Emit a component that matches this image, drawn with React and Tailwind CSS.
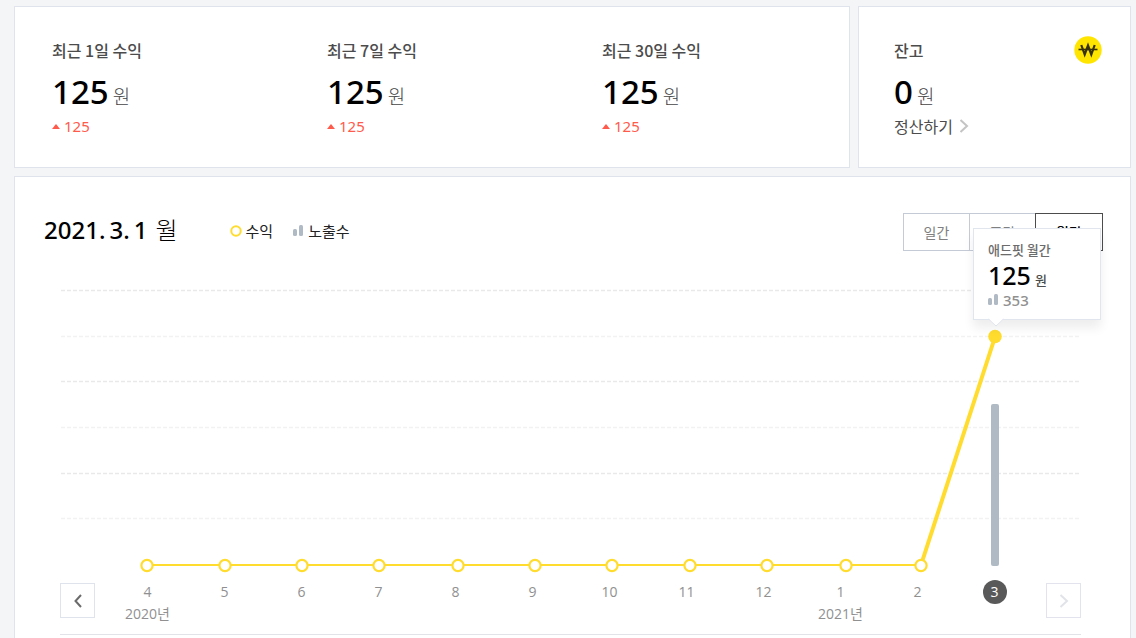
import React, { useState } from "react";

const POINTS = [87, 165, 242, 319, 398, 475, 552, 630, 707, 786, 861];
const GRID = [10, 56, 101, 147, 193, 238];
const MONTHS = [
  { label: "4", year: "2020년" },
  { label: "5" },
  { label: "6" },
  { label: "7" },
  { label: "8" },
  { label: "9" },
  { label: "10" },
  { label: "11" },
  { label: "12" },
  { label: "1", year: "2021년" },
  { label: "2" },
  { label: "3", active: true },
];

function Bars() {
  return (
    <svg width="11" height="12" viewBox="0 0 11 12" aria-hidden="true">
      <rect x="0" y="4" width="4" height="7" rx="1.5" fill="#b0bac5" />
      <rect x="6" y="0" width="4" height="11" rx="1.5" fill="#b0bac5" />
    </svg>
  );
}

function Amount({ value }) {
  return (
    <p className="mt-2.5 flex items-baseline gap-1 leading-10">
      <span className="font-['Noto_Sans',sans-serif] text-[33px] font-medium text-black">{value}</span>
      <span className="text-[19px] leading-10 font-light text-[#444]">원</span>
    </p>
  );
}

function Revenue({ title, value, diff }) {
  return (
    <div>
      <h2 className="text-base leading-6 font-medium text-[#4c4c4c]">{title}</h2>
      <Amount value={value} />
      <p className="-mt-0.5 flex items-center gap-1 font-['Noto_Sans',sans-serif] text-[15px] leading-6 text-[#ff5b4c]">
        <svg width="8" height="5" viewBox="0 0 8 5" aria-hidden="true">
          <path d="M4 0L8 5H0z" fill="#ff5b4c" />
        </svg>
        {diff}
      </p>
    </div>
  );
}

function Chevron({ d, color, width }) {
  return (
    <svg width="10" height="14" viewBox="0 0 10 14" fill="none" aria-hidden="true">
      <path d={d} stroke={color} strokeWidth={width} />
    </svg>
  );
}

function Tooltip() {
  return (
    <div className="absolute top-[-52px] right-[-20px] h-[92px] w-32 border border-[#e1e5ed] bg-white px-3.5 py-[11px] shadow-[0_8px_10px_rgba(0,0,0,0.07)]">
      <p className="text-[13px] leading-5 font-medium text-[#6b6b6b]">애드핏 월간</p>
      <p className="flex items-baseline gap-1 leading-[30px]">
        <span className="font-['Noto_Sans',sans-serif] text-[25px] font-medium text-black">125</span>
        <span className="text-[13px] font-medium text-[#4c4c4c]">원</span>
      </p>
      <p className="-mt-[3px] flex items-center gap-1 font-['Noto_Sans',sans-serif] text-[15px] leading-4 font-medium text-[#909090]">
        <Bars />
        353
      </p>
      <svg className="absolute top-[89px] left-3.5" width="16" height="9" viewBox="0 0 16 9" aria-hidden="true">
        <path d="M0 0L8 8L16 0z" fill="#fff" />
        <path d="M0.5 1L8 8L15.5 1" fill="none" stroke="#e1e5ed" />
      </svg>
    </div>
  );
}

export default function App() {
  const [period, setPeriod] = useState("월간");
  return (
    <main className="flex min-h-screen flex-col gap-2 bg-[#f4f5f7] pt-1.5 pr-[5px] pl-3.5 font-['Noto_Sans_CJK_KR',sans-serif]">
      <div className="flex gap-2">
        <section className="grid flex-1 grid-cols-[275fr_275fr_247fr] border border-[#dfe4ec] bg-white pt-[31px] pb-[29px] pl-[37px]">
          <Revenue title="최근 1일 수익" value="125" diff="125" />
          <Revenue title="최근 7일 수익" value="125" diff="125" />
          <Revenue title="최근 30일 수익" value="125" diff="125" />
        </section>
        <section className="flex w-[273px] items-start justify-between border border-[#dfe4ec] bg-white pt-[31px] pr-7 pl-[35px]">
          <div>
            <h2 className="text-base leading-6 font-medium text-[#4c4c4c]">잔고</h2>
            <Amount value="0" />
            <a href="#settle" className="-mt-0.5 flex items-center gap-1.5 text-base leading-6 text-[#4c4c4c]">
              정산하기
              <Chevron d="M1.5 1L8 7L1.5 13" color="#c4c4c4" width="2" />
            </a>
          </div>
          <svg className="-mt-0.5" width="28" height="28" viewBox="0 0 28 28" role="img" aria-label="원화">
            <circle cx="14" cy="14" r="13.7" fill="#ffe500" />
            <path d="M7.3 9L10.7 18.5L14 9.5L17.3 18.5L20.7 9" fill="none" stroke="#36310a" strokeWidth="2.2" />
            <path d="M4.5 13.5H23.5" stroke="#36310a" strokeWidth="1.6" />
          </svg>
        </section>
      </div>

      <section className="flex-1 border border-b-0 border-[#dfe4ec] bg-white pt-9">
        <header className="flex items-center justify-between pr-[27px] pl-[29px]">
          <div className="flex items-center">
            <h1 className="flex items-baseline gap-1 pb-1.5 font-['Noto_Sans',sans-serif] text-2xl leading-7 font-medium text-black">
              <span>2021.</span>
              <span>3.</span>
              <span>1</span>
              <span className="ml-1 font-['Noto_Sans_CJK_KR',sans-serif] leading-7 font-light">월</span>
            </h1>
            <ul className="ml-[52px] flex items-center gap-5 pb-0.5 text-[15px] text-[#222]">
              <li className="flex items-center gap-1">
                <svg width="12" height="12" viewBox="0 0 12 12" aria-hidden="true">
                  <circle cx="6" cy="6" r="4.7" fill="#fff" stroke="#ffdc2e" strokeWidth="2" />
                </svg>
                수익
              </li>
              <li className="flex items-center gap-1">
                <Bars />
                노출수
              </li>
            </ul>
          </div>
          <div className="flex">
            {["일간", "주간", "월간"].map((name) => (
              <button
                key={name}
                type="button"
                aria-pressed={period === name}
                onClick={() => setPeriod(name)}
                className={
                  period === name
                    ? "-ml-px h-[38px] w-[68px] border border-[#4c4c4c] text-sm font-medium text-black"
                    : "-ml-px h-[38px] w-[67px] border border-[#c5cbd6] text-sm text-[#808080]"
                }
              >
                {name}
              </button>
            ))}
          </div>
        </header>

        <div className="mr-[49px] ml-[45px] border-b border-[#e1e3e8] pt-[29px] pb-2.5">
          <div className="relative">
            <svg className="block h-auto w-full" viewBox="0 0 1021 296" role="img" aria-label="월간 수익과 노출수">
              {GRID.map((y, i) => (
                <path key={y} d={`M1 ${y + 0.5}H1021`} stroke={i % 2 ? "#f2f2f2" : "#e9e9e9"} strokeWidth="1.3" strokeDasharray="4 2" />
              ))}
              <rect x="931" y="124" width="8" height="162" rx="2" fill="#b0bac5" />
              <path d="M87 285H860" stroke="#ffdc2e" strokeWidth="2" />
              <path d="M861 285L935 57" stroke="#ffdc2e" strokeWidth="4" />
              {POINTS.map((x) => (
                <circle key={x} cx={x} cy="285.5" r="5.6" fill="#fff" stroke="#ffdc2e" strokeWidth="2.2" />
              ))}
              <circle cx="935" cy="56.5" r="6.8" fill="#ffdc2e" />
            </svg>
            <Tooltip />
          </div>

          <div className="flex items-start">
            <button type="button" aria-label="이전" className="mt-[7px] grid size-[35px] place-items-center border border-[#dfe4ec]">
              <Chevron d="M8 1L2.5 7L8 13" color="#6b6b6b" width="2" />
            </button>
            <ol className="mr-[13px] ml-3.5 grid flex-1 grid-cols-12 pt-1 text-center font-['Open_Sans','Noto_Sans_CJK_KR',sans-serif] text-sm text-[#909090]">
              {MONTHS.map(({ label, year, active }) => (
                <li key={label} className="flex flex-col items-center">
                  <span
                    className={
                      active
                        ? "size-6 rounded-full bg-[#595959] leading-6 font-medium text-white"
                        : "h-6 leading-6"
                    }
                  >
                    {label}
                  </span>
                  {year && <span className="h-5 leading-5">{year}</span>}
                </li>
              ))}
            </ol>
            <button type="button" aria-label="다음" className="mt-[7px] grid size-[35px] place-items-center border border-[#e3e3ed]">
              <Chevron d="M1.5 1L8 7L1.5 13" color="#e1e3e8" width="2" />
            </button>
          </div>
        </div>
      </section>
    </main>
  );
}
